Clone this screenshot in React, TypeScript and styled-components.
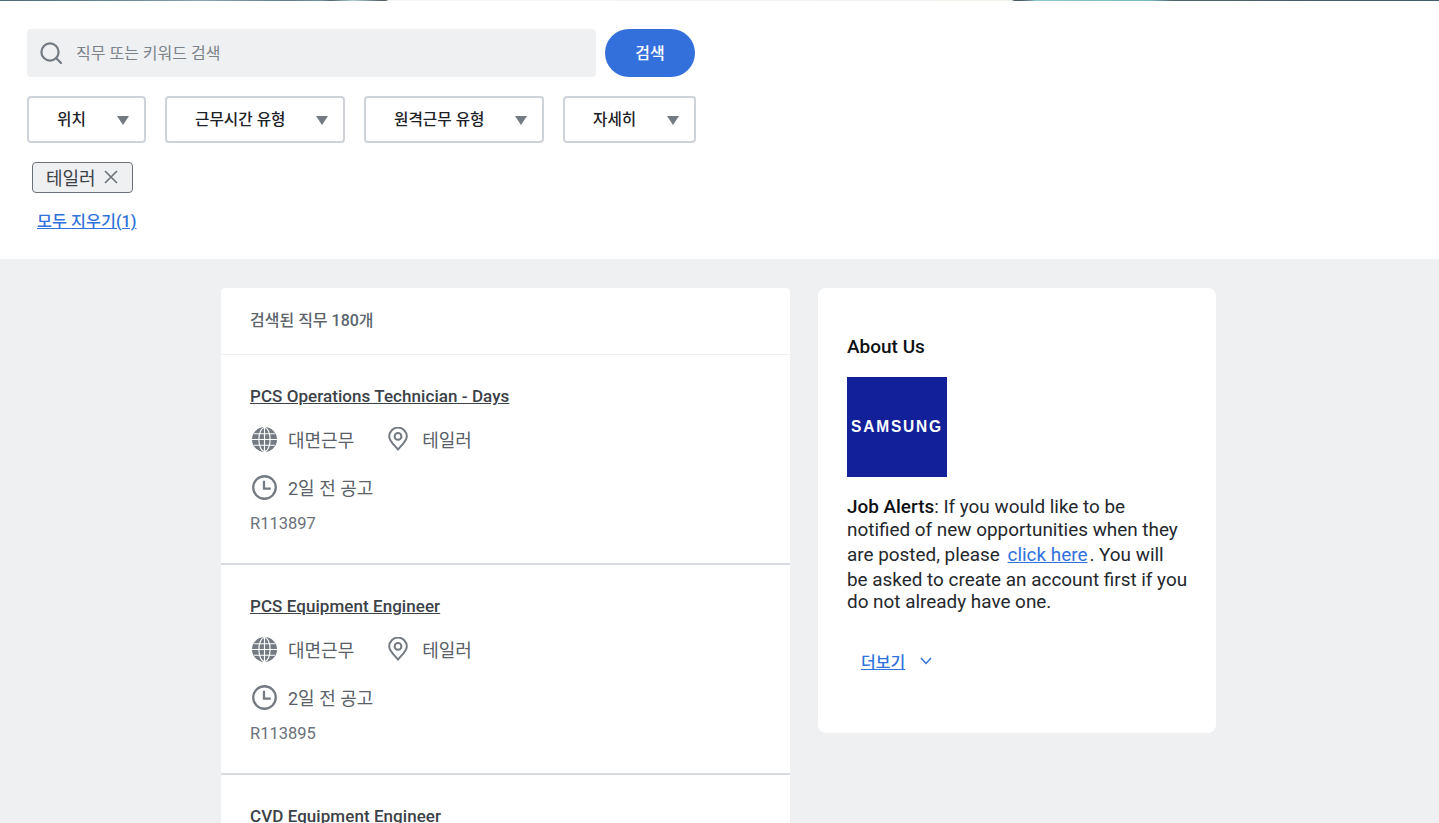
import React from 'react';
import styled, { createGlobalStyle } from 'styled-components';

const Global = createGlobalStyle`
  html, body { margin: 0; padding: 0; height: 100%; overflow: hidden; background: #eff0f2; }
  body { font-family: Roboto, "Noto Sans CJK KR", sans-serif; }
`;
const Page = styled.div`height: 823px; overflow: hidden; display: flex; flex-direction: column;`;
const TopStrip = styled.div`
  height: 1px; flex: none;
  background: linear-gradient(90deg,#4d6b78 0,#6f929d 10%,#8aa9b0 14%,#5f7f8a 20%,#7096a0 22.3%,#55666c 23%,#aed4d6 24.5%,#556068 26.5%,#556068 26.8%,#f4f7f3 27%,#eef3ea 70%,#f0f2ee 70.3%,#4a5a62 70.5%,#4a5a62 71%,#8fc6d0 72%,#7ab4c6 80%,#50646c 81.5%,#3f5a68 100%);
`;
const Hero = styled.section`background: #fff; height: 258px; flex: none; padding: 28px 0 0 27px; box-sizing: border-box; display: flex; flex-direction: column;`;
const SearchRow = styled.div`display: flex; gap: 9px;`;
const SearchBox = styled.div`width: 569px; height: 48px; background: #eff0f2; border-radius: 4px; display: flex; align-items: center; padding-left: 12px; box-sizing: border-box; gap: 13px;`;
const Placeholder = styled.span`font-size: 16px; color: #7b8289; margin-bottom: 3px;`;
const SearchButton = styled.button`width: 90px; height: 48px; border: 0; border-radius: 24px; background: #3470db; color: #fff; font: 500 16px Roboto, "Noto Sans CJK KR", sans-serif; padding: 0 0 3px;`;
const Filters = styled.div`display: flex; gap: 19px; margin-top: 19px;`;
const Filter = styled.button<{ $w: number }>`
  width: ${p => p.$w}px; height: 47px; box-sizing: border-box; background: #fff; border: 2px solid #ced3da; border-radius: 4px;
  display: flex; align-items: center; justify-content: space-between; padding: 0 15px 2px 28px;
  font: 500 15.7px Roboto, "Noto Sans CJK KR", sans-serif; color: #1d2126;
`;
const FilterLabel = styled.span`white-space: nowrap;`;
const Caret = styled.span`width: 0; height: 0; border-left: 6.5px solid transparent; border-right: 6.5px solid transparent; border-top: 9px solid #737a82; margin-top: 3px;`;
const Chip = styled.div`
  align-self: flex-start; margin: 19px 0 0 5px; height: 31px; width: 101px; box-sizing: border-box; background: #eff0f2; border: 1.5px solid #6b7178; border-radius: 4px;
  display: flex; align-items: center; padding: 0 0 1px 13px; gap: 8px; font-size: 18px; color: #3c4248;
`;
const ClearLink = styled.a`margin: 17px 0 0 10px; align-self: flex-start; font-size: 16.3px; font-weight: 500; color: #2f72dc; text-decoration: underline; line-height: 24px;`;
const Main = styled.main`flex: 1; display: flex; justify-content: center; align-items: flex-start; gap: 28px; padding: 29px 2px 0 0; min-height: 0;`;
const ListCard = styled.div`width: 569px; background: #fff; border-radius: 4px 4px 0 0; flex: none;`;
const ListHeader = styled.div`height: 67px; box-sizing: border-box; padding: 21px 29px 0; border-bottom: 1px solid #eff0f2; font-size: 16px; font-weight: 500; line-height: 24px; color: #5c646c;`;
const Job = styled.article`height: 210px; box-sizing: border-box; padding: 29px 29px 0; border-bottom: 2px solid #d8dbdf;`;
const JobTitle = styled.a`display: block; font-size: 17px; font-weight: 500; line-height: 24px; margin-bottom: -1px; color: #3c4248; text-decoration: underline; letter-spacing: 0.06px;`;
const MetaRow = styled.div`display: flex; align-items: center; height: 32px; margin-top: 16px; font-size: 18px; color: #5a6168;`;
const MetaGroup = styled.div`display: flex; align-items: center; gap: 10px; margin-right: 30px;`;
const IconBox = styled.span`width: 28px; height: 28px; display: flex; align-items: center; justify-content: center; flex: none;`;
const JobId = styled.div`font-size: 16.5px; line-height: 20px; color: #6a7179; margin-top: 11px;`;
const AboutCard = styled.aside`width: 398px; height: 445px; box-sizing: border-box; background: #fff; border-radius: 8px; padding: 47px 28px 0 29px; flex: none;`;
const AboutTitle = styled.h2`margin: 0; font-size: 19px; font-weight: 500; line-height: 24px; color: #0e1114;`;
const Logo = styled.div`width: 100px; height: 100px; margin-top: 18px; background: #12219a; display: flex; align-items: center; justify-content: center;`;
const LogoText = styled.span`color: #fff; font: 700 15.5px "Liberation Sans", sans-serif; letter-spacing: 1.8px; transform: scaleY(1.12); margin-bottom: 3px;`;
const Para = styled.p`margin: 18px 0 0; font-size: 18.9px; color: #24282c; width: 350px;`;
const Line = styled.span<{ $h: number }>`display: block; line-height: ${p => p.$h}px; white-space: nowrap;`;
const Strong = styled.span`font-weight: 500; color: #0e1114;`;
const InlineLink = styled.a`color: #2f72dc; text-decoration: underline; margin-left: 3px; margin-right: 2px;`;
const More = styled.div`display: flex; align-items: center; gap: 15px; margin: 35px 0 0 14px; font-size: 16px; font-weight: 500; color: #2f72dc;`;
const MoreLink = styled.a`text-decoration: underline;`;

const SearchIcon = () => (
  <svg width="24" height="24" viewBox="0 0 24 24" fill="none" stroke="#737a82" strokeWidth="2.2">
    <circle cx="11" cy="11" r="8.6" /><path d="M17.3 17.3 22 22" strokeLinecap="round" />
  </svg>
);
const GlobeIcon = () => (
  <svg width="25" height="25" viewBox="0 0 24 24">
    <circle cx="12" cy="12" r="12" fill="#737a82" />
    <g fill="none" stroke="#fff" strokeWidth="1.1">
      <ellipse cx="12" cy="12" rx="5.4" ry="11.5" />
      <path d="M12 0v24M0 12h24M2 6.5h20M2 17.5h20" />
    </g>
  </svg>
);
const PinIcon = () => (
  <svg width="20" height="24" viewBox="0 0 20 24" fill="none" stroke="#737a82" strokeWidth="2">
    <path d="M10 22.6C6 17.6 1.2 13.8 1.2 9.4a8.8 8.8 0 0 1 17.6 0c0 4.4-4.8 8.2-8.8 13.2Z" strokeLinejoin="round" />
    <circle cx="10" cy="9.4" r="3.4" />
  </svg>
);
const ClockIcon = () => (
  <svg width="25" height="25" viewBox="0 0 24 24" fill="none" stroke="#737a82" strokeWidth="2.2">
    <circle cx="12" cy="12" r="10.8" /><path d="M11.5 5.5v7.5h6.5" />
  </svg>
);
const CloseIcon = () => (
  <svg width="14" height="14" viewBox="0 0 14 14" stroke="#6b7178" strokeWidth="1.6"><path d="M1 1l12 12M13 1 1 13" /></svg>
);
const ChevronIcon = () => (
  <svg width="12" height="8" viewBox="0 0 12 8" fill="none" stroke="#2f72dc" strokeWidth="1.5"><path d="M1 1l5 5.5L11 1" /></svg>
);

const filters = [{ label: '위치', w: 119 }, { label: '근무시간 유형', w: 180 }, { label: '원격근무 유형', w: 180 }, { label: '자세히', w: 133 }];
const jobs = [
  { title: 'PCS Operations Technician - Days', id: 'R113897' },
  { title: 'PCS Equipment Engineer', id: 'R113895' },
  { title: 'CVD Equipment Engineer', id: 'R113890' },
];

export default function App() {
  return (
    <Page>
      <Global />
      <TopStrip />
      <Hero>
        <SearchRow>
          <SearchBox><SearchIcon /><Placeholder>직무 또는 키워드 검색</Placeholder></SearchBox>
          <SearchButton>검색</SearchButton>
        </SearchRow>
        <Filters>
          {filters.map(f => (
            <Filter key={f.label} $w={f.w}><FilterLabel>{f.label}</FilterLabel><Caret /></Filter>
          ))}
        </Filters>
        <Chip>테일러 <CloseIcon /></Chip>
        <ClearLink>모두 지우기(1)</ClearLink>
      </Hero>
      <Main>
        <ListCard>
          <ListHeader>검색된 직무 180개</ListHeader>
          {jobs.map(j => (
            <Job key={j.id}>
              <JobTitle>{j.title}</JobTitle>
              <MetaRow>
                <MetaGroup><IconBox><GlobeIcon /></IconBox>대면근무</MetaGroup>
                <MetaGroup><IconBox><PinIcon /></IconBox>테일러</MetaGroup>
              </MetaRow>
              <MetaRow>
                <MetaGroup><IconBox><ClockIcon /></IconBox>2일 전 공고</MetaGroup>
              </MetaRow>
              <JobId>{j.id}</JobId>
            </Job>
          ))}
        </ListCard>
        <AboutCard>
          <AboutTitle>About Us</AboutTitle>
          <Logo><LogoText>SAMSUNG</LogoText></Logo>
          <Para>
            <Line $h={24}><Strong>Job Alerts</Strong>: If you would like to be</Line>
            <Line $h={21}>notified of new opportunities when they</Line>
            <Line $h={30}>are posted, please <InlineLink>click here</InlineLink>. You will</Line>
            <Line $h={20}>be asked to create an account first if you</Line>
            <Line $h={24}>do not already have one.</Line>
          </Para>
          <More><MoreLink>더보기</MoreLink><ChevronIcon /></More>
        </AboutCard>
      </Main>
    </Page>
  );
}
